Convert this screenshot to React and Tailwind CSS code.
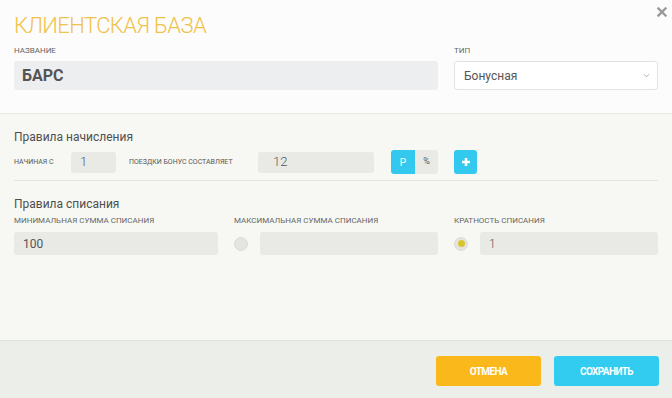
import { useState } from 'react'

const Radio = ({ checked, onClick }) => (
  <button
    onClick={onClick}
    className="w-[14px] h-[14px] rounded-full bg-[#e4e5e1] border border-[#dcddd8] flex items-center justify-center shrink-0"
  >
    {checked && <span className="w-[7px] h-[7px] rounded-full bg-[#d8c433]" />}
  </button>
)

const Label = ({ children, className = '' }) => (
  <div className={`text-[8px] leading-[10px] uppercase text-[#666] ${className}`}>{children}</div>
)

const App = () => {
  const [unit, setUnit] = useState('rub')
  const [limit, setLimit] = useState('step')

  return (
    <div
      className="relative w-[672px] h-[398px] flex flex-col bg-[#f7f8f3] overflow-hidden"
      style={{ fontFamily: 'Roboto, "Noto Sans", sans-serif' }}
    >
      <button className="absolute top-[7px] right-[5px] w-[10px] h-[10px] text-[#9a9a9a]">
        <svg viewBox="0 0 10 10" width="10" height="10">
          <path d="M1.5 1.5 L8.5 8.5 M8.5 1.5 L1.5 8.5" stroke="currentColor" strokeWidth="2.4" strokeLinecap="square" />
        </svg>
      </button>

      {/* header */}
      <div className="bg-[#fcfcfc] px-[14px] pt-[12px] pb-[23px] border-b border-[#e6e7e1]">
        <h1 className="text-[22px] leading-[28px] font-light text-[#efc24a] tracking-[-0.6px]">КЛИЕНТСКАЯ БАЗА</h1>
        <div className="grid grid-cols-3 gap-x-4 mt-[6px]">
          <div className="col-span-2">
            <Label>Название</Label>
            <div className="mt-[5px] h-[29px] rounded-[3px] bg-[#eceef0] flex items-center px-[8px] text-[16px] font-bold text-[#555]">
              БАРС
            </div>
          </div>
          <div>
            <Label>Тип</Label>
            <div className="mt-[5px] h-[29px] rounded-[3px] bg-white border border-[#e2e3e0] flex items-center justify-between pl-[9px] pr-[7px] text-[12px] text-[#555]">
              <span>Бонусная</span>
              <svg viewBox="0 0 8 5" width="7" height="5" className="text-[#aaa]">
                <path d="M1 1 L4 4 L7 1" fill="none" stroke="currentColor" strokeWidth="1.1" />
              </svg>
            </div>
          </div>
        </div>
      </div>

      {/* body */}
      <div className="flex-1 px-[14px] pt-[15px]">
        <h2 className="text-[12px] leading-[16px] font-normal text-[#4f4f4f]">Правила начисления</h2>
        <div className="mt-[5px] flex items-center h-[24px]">
          <span className="w-[57px] text-[7px] uppercase text-[#555]">Начиная с</span>
          <div className="w-[45px] h-[21px] rounded-[3px] bg-[#e9eae6] flex items-center pl-[9px] text-[13px] font-light text-[#555]">1</div>
          <span className="ml-[13px] w-[129px] text-[7px] uppercase text-[#555]">Поездки бонус составляет</span>
          <div className="w-[116px] h-[21px] rounded-[3px] bg-[#e9eae6] flex items-center pl-[15px] text-[13px] font-light text-[#555]">12</div>
          <div className="ml-[17px] flex h-[24px] rounded-[3px] overflow-hidden">
            <button
              onClick={() => setUnit('rub')}
              className={`w-[24px] h-full text-[10px] ${unit === 'rub' ? 'bg-[#33c8ee] text-white' : 'bg-[#e9eae6] text-[#555]'}`}
            >
              Р
            </button>
            <button
              onClick={() => setUnit('pct')}
              className={`w-[23px] h-full text-[9px] ${unit === 'pct' ? 'bg-[#33c8ee] text-white' : 'bg-[#e9eae6] text-[#555]'}`}
            >
              %
            </button>
          </div>
          <button className="ml-[16px] w-[23px] h-[24px] rounded-[3px] bg-[#33c8ee] flex items-center justify-center">
            <svg viewBox="0 0 10 10" width="10" height="10">
              <path d="M5 1 V9 M1 5 H9" stroke="white" strokeWidth="2.6" />
            </svg>
          </button>
        </div>
        <div className="mt-[6px] h-px bg-[#e3e4de]" />

        <h2 className="mt-[15px] text-[12px] leading-[16px] font-normal text-[#4f4f4f]">Правила списания</h2>
        <div className="grid grid-cols-3 gap-x-4 mt-[4px]">
          <div>
            <Label>Минимальная сумма списания</Label>
            <div className="mt-[6px] h-[23px] rounded-[3px] bg-[#e9eae6] flex items-center pl-[9px] text-[12px] text-[#555]">100</div>
          </div>
          <div>
            <Label>Максимальная сумма списания</Label>
            <div className="mt-[6px] flex items-center gap-[12px]">
              <Radio checked={limit === 'max'} onClick={() => setLimit('max')} />
              <div className="flex-1 h-[23px] rounded-[3px] bg-[#e9eae6]" />
            </div>
          </div>
          <div>
            <Label>Кратность списания</Label>
            <div className="mt-[6px] flex items-center gap-[12px]">
              <Radio checked={limit === 'step'} onClick={() => setLimit('step')} />
              <div className="flex-1 h-[23px] rounded-[3px] bg-[#e9eae6] flex items-center pl-[9px] text-[12px] font-light text-[#555]">1</div>
            </div>
          </div>
        </div>
      </div>

      {/* footer */}
      <div className="h-[58px] border-t border-[#dfe1db] bg-[#eceee9] flex justify-end items-start gap-[13px] pt-[15px] pr-[13px]">
        <button className="w-[105px] h-[30px] rounded-[3px] bg-[#fbb81b] text-white text-[10px] font-bold tracking-[-0.6px]">
          ОТМЕНА
        </button>
        <button className="w-[105px] h-[30px] rounded-[3px] bg-[#31ccef] text-white text-[10px] font-bold tracking-[-0.6px]">
          СОХРАНИТЬ
        </button>
      </div>
    </div>
  )
}

export default App
